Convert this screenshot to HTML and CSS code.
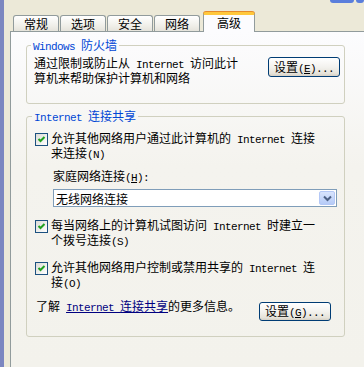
FILE: index.html
```html
<!DOCTYPE html>
<html lang="zh-CN">

<head>
    <meta charset="UTF-8">
    <meta name="viewport" content="width=device-width, initial-scale=1.0">
    <title>高级</title>
    <link rel="stylesheet" href="styles.css">
</head>

<body>
    <div class="window">
        <div class="frame-left"></div>
        <div class="dialog">
            <div class="titlebar-end">
                <span class="cap-btn"></span>
                <span class="cap-btn short"></span>
            </div>

            <div class="tabs">
                <div class="tab">常规</div>
                <div class="tab">选项</div>
                <div class="tab">安全</div>
                <div class="tab">网络</div>
                <div class="tab active">高级</div>
            </div>

            <div class="panel">
                <fieldset class="group firewall">
                    <legend><span class="en">Windows </span>防火墙</legend>
                    <div class="fw-row">
                        <p class="desc">通过限制或防止从<span class="en"> Internet </span>访问此计<br>算机来帮助保护计算机和网络</p>
                        <button class="btn">设置<span class="en">(<u>E</u>)...</span></button>
                    </div>
                </fieldset>

                <fieldset class="group sharing">
                    <legend><span class="en">Internet </span>连接共享</legend>

                    <div class="check-row first">
                        <span class="checkbox"><svg width="11" height="11" viewBox="0 0 11 11"><path d="M2.5 5 L4.5 7 L8.5 3" /></svg></span>
                        <p>允许其他网络用户通过此计算机的<span class="en"> Internet </span>连接<br>来连接<span class="en">(N)</span></p>
                    </div>

                    <div class="home-net">
                        <p class="label">家庭网络连接<span class="en">(<u>H</u>):</span></p>
                        <div class="combo">
                            <span class="combo-value">无线网络连接</span>
                            <span class="combo-arrow"><svg width="9" height="7" viewBox="0 0 9 7"><path d="M1 1.5 L4.5 5 L8 1.5" /></svg></span>
                        </div>
                    </div>

                    <div class="check-row dialup">
                        <span class="checkbox"><svg width="11" height="11" viewBox="0 0 11 11"><path d="M2.5 5 L4.5 7 L8.5 3" /></svg></span>
                        <p>每当网络上的计算机试图访问<span class="en"> Internet </span>时建立一<br>个拨号连接<span class="en">(S)</span></p>
                    </div>

                    <div class="check-row control">
                        <span class="checkbox"><svg width="11" height="11" viewBox="0 0 11 11"><path d="M2.5 5 L4.5 7 L8.5 3" /></svg></span>
                        <p>允许其他网络用户控制或禁用共享的<span class="en"> Internet </span>连<br>接<span class="en">(O)</span></p>
                    </div>

                    <div class="more-row">
                        <p>了解<span class="en"> </span><a href="#"><span class="en">Internet </span>连接共享</a>的更多信息。</p>
                        <button class="btn">设置<span class="en">(<u>G</u>)...</span></button>
                    </div>
                </fieldset>
            </div>
        </div>
    </div>
</body>

</html>
```

FILE: styles.css
```css
* {
    box-sizing: border-box;
    margin: 0;
    padding: 0;
}

body {
    width: 364px;
    height: 367px;
    overflow: hidden;
    background-color: #ece9d8;
    font-family: "Noto Sans CJK SC", "Liberation Sans", sans-serif;
    font-size: 12px;
    line-height: 13px;
    color: black;
}

.en {
    font-family: "Liberation Mono", "Noto Sans CJK SC", monospace;
    font-size: 11px;
    line-height: 11px;
    letter-spacing: -0.6px;
}

.window {
    display: flex;
    height: 367px;
}

.frame-left {
    width: 4px;
    flex-shrink: 0;
    background-color: #7c87c0;
}

.dialog {
    flex: 1;
    display: flex;
    flex-direction: column;
    padding-left: 6px;
}

.titlebar-end {
    height: 4px;
    display: flex;
    justify-content: flex-end;
    gap: 2px;
}

.cap-btn {
    width: 24px;
    height: 3px;
    background-color: #5a7edc;
    border-radius: 0 0 3px 3px;
}

.cap-btn.short {
    width: 8px;
}

/* onglets */
.tabs {
    display: flex;
    align-items: flex-end;
    padding-left: 3px;
    margin-top: 8px;
    margin-bottom: -1px;
}

.tab {
    width: 46px;
    height: 17px;
    margin-right: 1px;
    border: 1px solid #919b9c;
    border-bottom: none;
    border-radius: 3px 3px 0 0;
    background: linear-gradient(#ffffff, #f0efe9 60%, #e3e1d9);
    text-align: center;
    padding-top: 1px;
}

.tab.active {
    position: relative;
    z-index: 1;
    width: 52px;
    height: 20px;
    margin-left: 2px;
    border-top: 3px solid #ffc83c;
    box-shadow: 0 -1px 0 #e68b2c;
    background: #fcfcfe;
    padding-top: 1px;
}

.panel {
    flex: 1;
    border: 1px solid #919b9c;
    border-right: none;
    border-bottom: none;
    background: linear-gradient(#fcfcfe, #f4f3ee 40%, #f3f2ec);
    padding-top: 6px;
}

/* groupes */
.group {
    width: 319px;
    margin-left: 15px;
    border: 1px solid #d0d0bf;
    border-radius: 3px;
    min-width: 0;
}

.group legend {
    color: #0046d5;
    padding: 0 2px;
    margin-left: -3px;
}

.firewall {
    padding: 3px 4px 19px 7px;
}

.fw-row {
    display: flex;
    justify-content: space-between;
    align-items: flex-start;
}

.btn {
    width: 72px;
    height: 20px;
    margin-top: 1px;
    border: 1px solid #003c74;
    border-radius: 3px;
    background: linear-gradient(#ffffff, #f3f2ee 50%, #e6e3da 85%, #d6d0c5);
    font-family: "Noto Sans CJK SC", sans-serif;
    font-size: 12px;
    line-height: 13px;
    color: black;
}

.sharing {
    margin-top: 5px;
    padding: 7px 8px 15px 8px;
}

.check-row {
    display: flex;
    align-items: flex-start;
    gap: 3px;
}

.checkbox {
    width: 13px;
    height: 13px;
    flex-shrink: 0;
    margin-top: 2px;
    border: 1px solid #1c5180;
    background: linear-gradient(135deg, #dcdcd7, #ffffff);
    display: flex;
    align-items: center;
    justify-content: center;
}

.checkbox path {
    fill: none;
    stroke: #21a121;
    stroke-width: 2;
}

.home-net {
    padding-left: 18px;
    margin-top: 8px;
}

.combo {
    width: 284px;
    height: 18px;
    margin-top: 5px;
    border: 1px solid #7f9db9;
    background-color: white;
    display: flex;
    justify-content: space-between;
    align-items: center;
    padding: 0 1px 0 2px;
}

.combo-arrow {
    width: 16px;
    height: 14px;
    border: 1px solid #b4c8f6;
    border-radius: 2px;
    background: linear-gradient(#d8e4fd, #b6cbf7);
    display: flex;
    align-items: center;
    justify-content: center;
}

.combo-arrow path {
    fill: none;
    stroke: #4d6185;
    stroke-width: 2;
}

.dialup {
    margin-top: 11px;
}

.control {
    margin-top: 12px;
}

.more-row {
    display: flex;
    align-items: flex-start;
    margin-top: 9px;
    padding-left: 1px;
}

.more-row .btn {
    margin-left: auto;
    margin-right: 5px;
    margin-top: 3px;
    height: 19px;
}

a {
    color: #000080;
    text-decoration: underline;
}
```
